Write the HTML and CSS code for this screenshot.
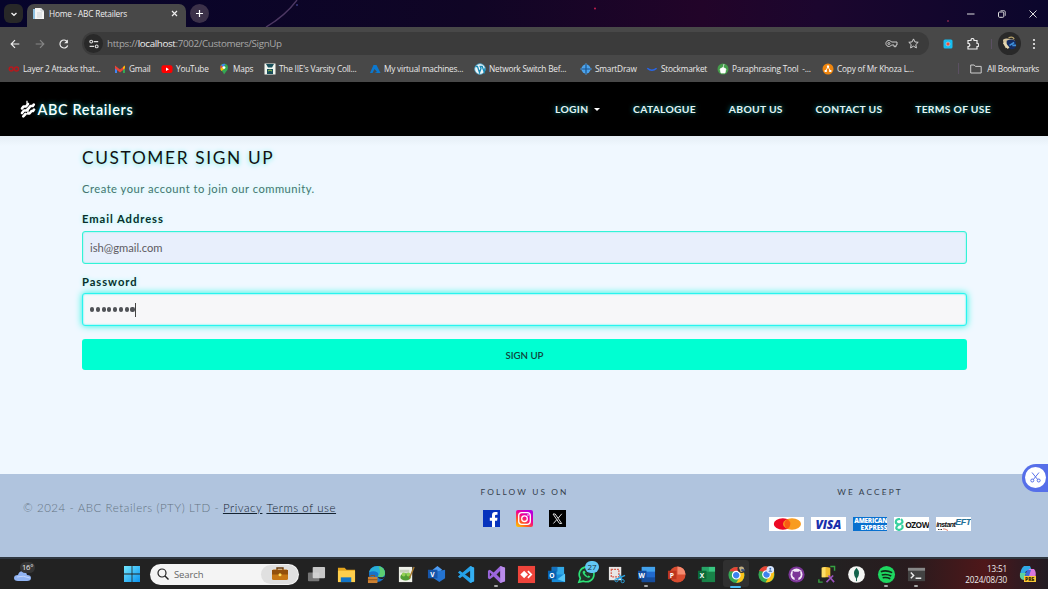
FILE: index.html
```html
<!DOCTYPE html>
<html lang="en">
<head>
<meta charset="utf-8">
<title>Home - ABC Retailers</title>
<link rel="stylesheet" href="styles.css">
</head>
<body>
<div class="screen">
  <header class="titlebar">
    <svg class="sky" width="1048" height="27" viewBox="0 0 1048 27"><path d="M266 27Q285 16 297 0" fill="none" stroke="#4d3863" stroke-width="1.4"/><circle cx="595" cy="8.500" r="1" fill="#c51f51"/><circle cx="948" cy="21" r=".8" fill="#c83b5d"/><circle cx="297" cy="5" r="1" fill="#39387e"/></svg>
    <div class="tab-search"><svg width="10" height="10" viewBox="0 0 10 10"><path d="M2.500 4 5 6.300 7.500 4" fill="none" stroke="#eee" stroke-width="1.4"/></svg></div>
    <div class="tab">
      <svg width="11" height="12" viewBox="0 0 11 12"><path d="M0 1h6v10H0z" fill="#b8d9ee"/><path d="M2 0h6l3 3v8H2z" fill="#f4f4f4"/><path d="M8 0v3h3M4 5h5M4 7h5M4 9h5" stroke="#bcc4ca" stroke-width=".7" fill="none"/><path d="M1 1v10" stroke="#64a9d5"/></svg>
      <span class="tab-title">Home - ABC Retailers</span>
      <svg class="tab-close" width="7" height="7" viewBox="0 0 7 7"><path d="m1 1 5 5m0-5L1 6" stroke="#eee" stroke-width="1.2"/></svg>
    </div>
    <div class="new-tab"><svg width="9" height="9" viewBox="0 0 9 9"><path d="M4.500 1v7M1 4.500h7" stroke="#fff" stroke-width="1.2"/></svg></div>
    <div class="window-controls">
      <svg width="8" height="10" viewBox="0 0 8 10"><path d="M0 5h7.500" stroke="#ddd"/></svg>
      <svg width="8" height="8" viewBox="0 0 8 8"><rect x=".5" y="2" width="5.300" height="5.300" rx="1" fill="none" stroke="#ddd"/><path d="M2.500.7H6q1.300 0 1.300 1.300v3.800" fill="none" stroke="#ddd" stroke-width=".8"/></svg>
      <svg width="8" height="8" viewBox="0 0 8 8"><path d="m.5.500 7 7m0-7-7 7" stroke="#ddd"/></svg>
    </div>
  </header>

  <div class="toolbar">
    <svg class="tool" width="10" height="10" viewBox="0 0 10 10"><path d="M9.300 5H1.400M5 1.200 1.200 5 5 8.800" fill="none" stroke="#eee" stroke-width="1.2"/></svg>
    <svg class="tool" width="10" height="10" viewBox="0 0 10 10"><path d="M.7 5h7.900M5 1.200 8.800 5 5 8.800" fill="none" stroke="#858585" stroke-width="1.2"/></svg>
    <svg class="tool" width="10" height="10" viewBox="0 0 10 10"><path d="M8.700 6.500A4 4 0 1 1 8.200 2.600" fill="none" stroke="#eee" stroke-width="1.2"/><path d="M8.900.5v3.700H5.200z" fill="#eee"/></svg>
    <div class="address">
      <div class="site-info"><svg width="10" height="10" viewBox="0 0 10 10"><g fill="none" stroke="#ddd" stroke-width="1.100"><circle cx="2.200" cy="2.600" r="1.400"/><path d="M4.700 2.600h4.500M.6 7.400h4.600"/><circle cx="7.700" cy="7.400" r="1.400"/></g></svg></div>
      <span class="url">https://<b>localhost</b>:7002/Customers/SignUp</span>
      <svg class="key" width="13" height="9" viewBox="0 0 13 9"><path d="M6.500 3A3 3 0 1 0 6.500 6H9v1.700h2V6h1V3z" fill="none" stroke="#ccc"/><circle cx="3.900" cy="4.500" r="1" fill="none" stroke="#ccc"/></svg>
      <svg width="11" height="11" viewBox="0 0 11 11"><path d="m5.500.9 1.400 3 3.300.4-2.400 2.300.6 3.300-2.900-1.700-2.900 1.700.6-3.300L.8 4.300l3.300-.4z" fill="none" stroke="#d2d2d2" stroke-width="1"/></svg>
    </div>
    <svg class="ext" width="10" height="10" viewBox="0 0 10 10"><rect x=".5" y=".5" width="9" height="9" rx="1.500" fill="#15bdf1"/><circle cx="5" cy="5" r="2" fill="#f04d36" stroke="#a9c9dc" stroke-width=".8"/></svg>
    <svg class="puzzle" width="12" height="12" viewBox="0 0 12 12"><path d="M1 2.500h3V2a1.500 1.500 0 0 1 3 0v.5h3v3h.3a1.500 1.500 0 0 1 0 3H10V11H1V8.500c2.500 0 2.500-3.200 0-3.200z" fill="none" stroke="#eee" stroke-width="1.200"/></svg>
    <span class="tool-line"></span>
    <div class="avatar"><svg width="15" height="15" viewBox="0 0 16 16"><path d="M1 4q3-2 6-1l6 1 1 3-6 1-1 4-3 1Q1 9 1 4" fill="#d4c49f"/><path d="M5 5q6-3 10 1l-1 7q-6 3-9-3z" fill="#142c61"/><path d="m8 10 5-3m-2 3h4" stroke="#3e8fdb" stroke-width="1.800"/><path d="m2 7 5 6" stroke="#e6d8b3" stroke-width="2.500"/><path d="M7 2q4-2 6 1" stroke="#b9a46b" stroke-width="1.500" fill="none"/></svg></div>
    <svg class="dots" width="4" height="12" viewBox="0 0 4 12"><g fill="#eee"><circle cx="2" cy="2" r="1.100"/><circle cx="2" cy="6" r="1.100"/><circle cx="2" cy="10" r="1.100"/></g></svg>
  </div>

  <div class="bookmarks">
    <div class="bm w106"><svg width="12" height="12" viewBox="0 0 12 12"><g fill="none" stroke="#b7191d" stroke-width="1.400"><circle cx="3.200" cy="6" r="2"/><circle cx="8.500" cy="6" r="2"/></g></svg><span>Layer 2 Attacks that...</span></div>
    <div class="bm w47"><svg width="12" height="12" viewBox="0 0 12 12"><path d="M1 3v7h2V5z" fill="#4285f4"/><path d="M9 5v5h2V3z" fill="#34a853"/><path d="M1 2.500 6 6.500l5-4v3l-5 4-5-4z" fill="#ea4335"/><path d="m9 4 2-1.500V5L9 6.500z" fill="#fbbc04"/></svg><span>Gmail</span></div>
    <div class="bm w57"><svg width="12" height="12" viewBox="0 0 12 12"><rect x=".5" y="2.300" width="11" height="7.700" rx="2" fill="#f00"/><path d="m5 4.400 3 1.800-3 1.800z" fill="#fff"/></svg><span>YouTube</span></div>
    <div class="bm w46"><svg width="12" height="12" viewBox="0 0 12 12"><path d="M2 4.700a4 4 0 0 1 8 0q0 2-2 4L6 11.500q-.4-2-2-3.500-2-1.700-2-3.300" fill="#34a853"/><path d="M3 2.200Q5 0 7.500 1L4.300 5.200z" fill="#4285f4"/><path d="M3 2.200Q1.700 3.700 2.300 6l2.600-2.200z" fill="#ea4335"/><path d="m2.300 6 2-2 2 2-3 2z" fill="#fbbc04"/><circle cx="6" cy="4.600" r="1.400" fill="#fff"/></svg><span>Maps</span></div>
    <div class="bm w105"><svg width="12" height="12" viewBox="0 0 12 12"><path d="M.5.500h11v11H.5z" fill="#f0f5ef"/><path d="M2 1h8L8 4.500H4zM3 6h6v5H3z" fill="#184f5a"/><path d="M4 8q2-2 4 0" stroke="#9cc343" fill="none"/></svg><span>The IIE's Varsity Coll...</span></div>
    <div class="bm w105"><svg width="12" height="12" viewBox="0 0 12 12"><path d="M4.500 2h3L11.500 10H5.500l2.500-1-2.500-3-2 4H1z" fill="#0b78cf"/></svg><span>My virtual machines...</span></div>
    <div class="bm w106"><svg width="12" height="12" viewBox="0 0 12 12"><circle cx="6" cy="6" r="5.300" fill="#eef5f8" stroke="#4daad0" stroke-width=".8"/><path d="M1.500 3.500h2l2 6L7 5.500l-.8-2h2l2 5.500 1-4" stroke="#178ab6" stroke-width="1.300" fill="none"/></svg><span>Network Switch Bef...</span></div>
    <div class="bm w66"><svg width="12" height="12" viewBox="0 0 12 12"><circle cx="6" cy="6" r="4.500" fill="#4aa3ed"/><path d="M6 0 8 3H4zM12 6 9 8V4zM6 12 4 9h4zM0 6l3-2v4z" fill="#58abee"/><path d="M6 1v10M1 6h10" stroke="#1c538c" stroke-width="1.200"/></svg><span>SmartDraw</span></div>
    <div class="bm w71"><svg width="12" height="12" viewBox="0 0 12 12"><path d="M1.300 5.200q4.600 4 9.300 0" fill="none" stroke="#2867ea" stroke-width="1.500"/></svg><span>Stockmarket</span></div>
    <div class="bm w105"><svg width="12" height="12" viewBox="0 0 12 12"><circle cx="6" cy="6" r="5.500" fill="#459c4b"/><path d="M3 6q3-3 6 0l-1 4H4zM6 5l1-4" fill="#fff" stroke="#fff" stroke-width=".7"/></svg><span>Paraphrasing Tool&nbsp; -...</span></div>
    <div class="bm w105"><svg width="12" height="12" viewBox="0 0 12 12"><circle cx="6" cy="6" r="5.500" fill="#ef850d"/><path d="m3.500 8 2.500-4 2.500 4" fill="none" stroke="#fff" stroke-width=".9"/><path d="M4.900 2.600h2.200v2H4.900zM2.600 7h2.200v2H2.600zm4.600 0h2.200v2H7.200z" fill="#fff"/></svg><span>Copy of Mr Khoza L...</span></div>
    <div class="all-bm"><svg width="12" height="10" viewBox="0 0 12 10"><path d="M.7 1h3.500l1.200 1.400h5.800V9H.7z" fill="none" stroke="#ccc"/></svg><span>All Bookmarks</span></div>
  </div>

  <nav class="navbar">
    <div class="brand"><svg width="16" height="18" viewBox="0 0 16 18"><g fill="none" stroke="#fff" stroke-width="2.600" stroke-linecap="round" stroke-linejoin="round"><path d="M2 8.500 3.500 6.500H6L8 4"/><path d="M2 13l2-2.500h2.500l2-2 2-2.500h2.300l1-1.500"/><path d="M3.300 16.300l2.200-2.300M8 13.500h1.500l2-2.500h1.500l1-1.500"/></g><path d="M7 .8v3M8 9v4" stroke="#fff" stroke-width="1.300"/></svg><span>ABC Retailers</span></div>
    <div class="nav-links"><a class="login">LOGIN <i class="caret"></i></a><a>CATALOGUE</a><a>ABOUT US</a><a>CONTACT US</a><a>TERMS OF USE</a></div>
  </nav>

  <main class="page">
    <h1><span>CUSTOMER SIGN UP</span></h1>
    <p class="lead"><span>Create your account to join our community.</span></p>
    <label class="email-label">Email Address</label>
    <div class="field filled"><span>ish@gmail.com</span></div>
    <label class="pw-label">Password</label>
    <div class="field focused"><span class="bullets"><i></i><i></i><i></i><i></i><i></i><i></i><i></i><i></i></span><i class="cursor"></i></div>
    <div class="submit"><span>SIGN UP</span></div>
    <div class="snip-tab"><div><svg width="11" height="11" viewBox="0 0 11 11"><g fill="none" stroke="#566fe9"><path d="m2 .5 5.800 7.200M9 .5 3.200 7.700"/><circle cx="2.300" cy="8.500" r="1.500"/><circle cx="8.700" cy="8.500" r="1.500"/></g></svg></div></div>
  </main>

  <footer class="footer">
    <div class="copy"><span class="c1">© 2024 - ABC Retailers (PTY) LTD - </span><a>Privacy</a><a>Terms of use</a></div>
    <div class="follow"><span class="foot-title">FOLLOW US ON</span>
      <div class="socials">
        <svg width="17" height="17" viewBox="0 0 17 17"><path d="M0 0h17v17H0z" fill="#0733bd"/><path d="M9 17v-6.300H6.800V7.800H9V5.300Q9 2 12 2h2.500v2.700h-1.300q-1.200 0-1.200 1v2.100h2.500l-.4 2.900H12V17z" fill="#fff"/></svg>
        <svg width="17" height="17" viewBox="0 0 17 17"><defs><linearGradient id="insta" x1="0" y1="1" x2=".7" y2="0"><stop stop-color="#ffd400"/><stop offset=".35" stop-color="#ff5b22"/><stop offset=".65" stop-color="#f20097"/><stop offset="1" stop-color="#b600df"/></linearGradient></defs><rect width="17" height="17" rx="2" fill="url(#insta)"/><rect x="2.700" y="2.700" width="11.600" height="11.600" rx="3" fill="none" stroke="#fff" stroke-width="1.300"/><circle cx="8.500" cy="8.700" r="2.800" fill="none" stroke="#fff" stroke-width="1.300"/><circle cx="12" cy="5" r=".8" fill="#fff"/></svg>
        <svg width="17" height="17" viewBox="0 0 17 17"><path d="M0 0h17v17H0z"/><path d="M4 4h2.200l6.500 9.500h-2.200zM12.800 3.800 9.300 8M8 9.400l-3.600 4.100" fill="none" stroke="#ddd"/></svg>
      </div>
    </div>
    <div class="accept"><span class="foot-title">WE ACCEPT</span>
      <div class="cards">
        <div class="card"><svg width="34" height="14" viewBox="0 0 34 14"><ellipse cx="12.800" cy="7" rx="9" ry="5.800" fill="#ec0824"/><ellipse cx="22" cy="7" rx="9" ry="5.800" fill="#f89c20"/><path d="M17.400 2q6 5 0 10-6-5 0-10" fill="#fa5b12"/></svg></div>
        <div class="card visa">VISA</div>
        <div class="card amex"><span class="am">AMERICAN</span><span>EXPRESS</span></div>
        <div class="card ozow"><svg width="10" height="13" viewBox="0 0 10 13"><path d="M6 1Q1 1 2 5l3 2M7 1q4 4-3 6-4 4 1 5 5-1 3-5" fill="none" stroke="#38d1a0" stroke-width="2.200"/></svg><span>OZOW</span></div>
        <div class="card eft"><span>instant</span><b>EFT</b><svg width="11" height="3" viewBox="0 0 11 3"><path d="M0 1.500h4" stroke="#333" stroke-dasharray="1 .5"/><path d="M5 1h2l3 1.500" stroke="#e28372" fill="none"/></svg></div>
      </div>
    </div>
  </footer>

  <div class="taskbar">
    <div class="weather"><svg width="22" height="20" viewBox="0 0 22 20"><path d="M4 17q-4 0-4-3t4-3q1-4 5-4 3 0 4 4 4 0 4 3t-4 3z" fill="#91b4f3"/><path d="M3 13q6-2 13 1" stroke="#c3d5fb" fill="none"/></svg><span>16°</span></div>
    <div class="ti"><svg viewBox="0 0 20 20"><defs><linearGradient id="win" x2="1" y2="1"><stop stop-color="#72e7ff"/><stop offset="1" stop-color="#0b93ee"/></linearGradient></defs><path d="M2 2h7.600v7.600H2zm8.400 0H18v7.600h-7.600zM2 10.400h7.600V18H2zm8.400 0H18V18h-7.600z" fill="url(#win)"/></svg></div>
    <div class="search"><svg width="12" height="12" viewBox="0 0 12 12"><circle cx="5" cy="5" r="4" fill="none" stroke="#222" stroke-width="1.200"/><path d="m8 8 3.500 3.500" stroke="#222" stroke-width="1.400"/></svg><span>Search</span><div class="case"><svg width="18" height="16" viewBox="0 0 18 16"><path d="M6 4V2h6v2" fill="none" stroke="#683a0a" stroke-width="1.400"/><rect x="1" y="3.500" width="16" height="10.500" rx="1.500" fill="#c67715"/><path d="M1 4h16v4.500H1z" fill="#92500c"/><circle cx="9" cy="8.700" r="1.500" fill="#ffe05c"/></svg></div></div>
    <div class="apps">
      <div class="ti"><svg viewBox="0 0 20 20"><rect x="1" y="8" width="12" height="9" rx="1" fill="#777"/><rect x="6" y="2" width="13" height="12" rx="1" fill="#d9d9d9" opacity=".9"/></svg></div>
      <div class="ti"><svg viewBox="0 0 20 20"><path d="M1 3h7l2 2h9v12H1z" fill="#e5a51d"/><path d="M1 6h18v12H1z" fill="#ffcf4c"/><path d="M4 13h11v5H4z" fill="#1275c7"/></svg></div>
      <div class="ti"><svg viewBox="0 0 20 20"><circle cx="10.500" cy="9.500" r="8.500" fill="#1773c9"/><path d="M2 8q2-7 9-7 8 0 8 8-1 5-8 3 2-2 0-4-4-3-9 0" fill="#28afd8"/><path d="M12 1.200q7 1 7 8-1 5-8 3 5-4 1-11" fill="#5cce72"/><path d="M11 12q4 2 7.500 0-.5 1.500-1.500 2.500-4 1-6-2.500" fill="#222"/><path d="M1 12.500h10V19H1z" fill="#cd8131"/><path d="M4 12.500V11h4v1.500M1 15.500h10" stroke="#8d511d" fill="none"/></svg></div>
      <div class="ti"><svg viewBox="0 0 20 20"><path d="M2 2h14v16H2z" fill="#eef0e8"/><path d="M3 5h10v3H3z" fill="#c6d0bc"/><ellipse cx="9" cy="12.500" rx="5.500" ry="3.800" fill="#519e35"/><circle cx="7" cy="10" r="2" fill="#93d155"/><circle cx="12" cy="10" r="2" fill="#93d155"/><path d="m13 14 5-12" stroke="#a7792c" stroke-width="1.500"/></svg></div>
      <div class="ti"><svg viewBox="0 0 20 20"><path d="m11 1 5 4-5 4-5-4z" fill="#4d9df5"/><path d="M8 7l11-2v9l-6 4-6-4z" fill="#2473d0"/><path d="M1 5h10v9H1z" fill="#1656aa"/><text x="3.500" y="12.300" class="glyph">V</text></svg></div>
      <div class="ti"><svg viewBox="0 0 20 20"><path d="m14 1 4 2v14l-4 2L1 8l2-2 11 8V6L3 14l-2-2z" fill="#25a1e7"/><path d="m14 1 4 2v14l-4 2z" fill="#34aff2"/></svg></div>
      <div class="ti run"><svg viewBox="0 0 20 20"><path d="m14 1 5 2v14l-5 2-7-7-4 3-2-1V6l2-1 4 3zM14 6l-4 4 4 4zM3 8v4l2-2z" fill="#9b66dc" fill-rule="evenodd"/><path d="m14 1 5 2v14l-5 2z" fill="#b98be9"/></svg></div>
      <div class="ti"><svg viewBox="0 0 20 20"><path d="M1 1h18v18H1z" fill="#ef443b"/><path d="m7.500 6 4 4-4 4-4-4z" fill="#fff"/><path d="m11.500 6.500 3.500 3.500-3.500 3.500" fill="none" stroke="#fff" stroke-width="1.800"/></svg></div>
      <div class="ti"><svg viewBox="0 0 20 20"><path d="M5 2h13v10H5z" fill="#32a9e7"/><path d="M5 2h6v5H5z" fill="#1671bd"/><path d="M5 10h14v8H5z" fill="#168bd9"/><path d="m19 9-8 6 8 3z" fill="#56c7f5"/><path d="M1 6h9v9H1z" fill="#0762b1"/><text x="2.300" y="13.300" class="glyph">O</text></svg></div>
      <div class="ti whats"><svg viewBox="0 0 20 20"><path d="m2 18 1.500-4A7.800 7.800 0 1 1 7 17z" fill="#20392b" stroke="#2ce277" stroke-width="1.700"/><path d="M7 6q-3 2 2 6 4 3 5 0l-2-1-1 1-3-3 1-1-1-2z" fill="#2ce277"/></svg><b>27</b></div>
      <div class="ti"><svg viewBox="0 0 20 20"><path d="M2 2h13v14H2z" fill="#e8e7e6"/><path d="M4.500 4.500h8v8h-8z" fill="none" stroke="#d65e4d" stroke-width="1.300" stroke-dasharray="2 1"/><path d="m10 15 9-4M13 10l3 6" stroke="#2ca2dd" stroke-width="1.500"/><circle cx="10" cy="16" r="1.700" fill="none" stroke="#2ca2dd"/><circle cx="16.500" cy="17" r="1.700" fill="none" stroke="#2ca2dd"/></svg></div>
      <div class="ti run"><svg viewBox="0 0 20 20"><path d="M5 2h14v16H5z" fill="#2169cc"/><path d="M5 2h14v5H5z" fill="#43a2ec"/><path d="M5 13h14v5H5z" fill="#164d9d"/><path d="M1 6h9v9H1z" fill="#124da1"/><text x="1.700" y="13.300" class="glyph">W</text></svg></div>
      <div class="ti"><svg viewBox="0 0 20 20"><circle cx="11" cy="10" r="8.500" fill="#d84c30"/><path d="M11 1.500v8.500h8.500Q19 2 11 1.500" fill="#f58b70"/><path d="M1 6h9v9H1z" fill="#bd351e"/><text x="3" y="13.300" class="glyph">P</text></svg></div>
      <div class="ti"><svg viewBox="0 0 20 20"><path d="M5 2h14v16H5z" fill="#188348"/><path d="M12 2h7v5h-7z" fill="#38c681"/><path d="M5 2h7v5H5z" fill="#27a568"/><path d="M1 6h9v9H1z" fill="#0c6b38"/><text x="3" y="13.300" class="glyph">X</text></svg></div>
      <div class="ti active"><svg viewBox="0 0 20 20"><circle cx="10" cy="10.500" r="8.500" fill="#35a954"/><path d="M2.500 6.500Q6 1 13 2.500l5 4.500H10z" fill="#e84335"/><path d="M10 7h7.700q2.500 11-8 12l4-7z" fill="#fbc319"/><circle cx="9.700" cy="10.700" r="4" fill="#3c82ef" stroke="#fff" stroke-width="1.200"/><circle cx="15.500" cy="4" r="4.500" fill="#313033"/><path d="M12.500 2.500q3-2 5 0l1 3-4 2z" fill="#c1ae80"/><path d="m15 5 3.500 1" stroke="#344f83" stroke-width="2"/></svg></div>
      <div class="ti"><svg viewBox="0 0 20 20"><circle cx="10" cy="10" r="8.500" fill="#35a954"/><path d="M2 6q5-8 14-2l2 4h-8z" fill="#e84335"/><path d="M10 6h8q1 12-9 12.500l4-7z" fill="#fbc319"/><circle cx="10" cy="10" r="4" fill="#3c82ef" stroke="#fff" stroke-width="1.200"/><circle cx="14" cy="5" r="4" fill="#d7e6ff"/><circle cx="14" cy="4" r="1" fill="#3c6eaf"/><path d="M12 7q2-3 4 0" fill="#3c6eaf"/></svg></div>
      <div class="ti"><svg viewBox="0 0 20 20"><circle cx="10" cy="10" r="8.500" fill="#7c3698"/><circle cx="10" cy="10" r="6.300" fill="#f3eaf7"/><path d="M8 16.300v-2.800Q4.500 12 6 8.500V6l2 1h4l2-1v2.500q1.500 3.500-2 5v2.800z" fill="#7c3698"/></svg></div>
      <div class="ti"><svg viewBox="0 0 20 20"><path d="M5 3q4-2 9 0v10H5z" fill="#f2bd2e"/><path d="M5 3q2-1 4-1v11H5z" fill="#ffdd67"/><path d="M2 15v3h4M14 1.500h4.500V6" fill="none" stroke="#36a342" stroke-width="1.500"/><path d="m10 18 7-7m-5 0 6 7" stroke="#9b54bd" stroke-width="1.700"/></svg></div>
      <div class="ti"><svg viewBox="0 0 20 20"><circle cx="10" cy="10" r="8.800" fill="#f4f5f3"/><path d="M10 3q5.500 6 0 12-5.500-6 0-12" fill="#116149"/><path d="M10 8v9" stroke="#116149"/></svg></div>
      <div class="ti run"><svg viewBox="0 0 20 20"><circle cx="10" cy="10" r="9" fill="#1ed760"/><path d="M4 7q6-2 12 1M5 10.500q5-1.500 10 1M6 13.500q4-1 8 1" fill="none" stroke="#102b18" stroke-width="1.700"/></svg></div>
      <div class="ti run"><svg viewBox="0 0 20 20"><path d="M1 3h18v14H1z" fill="#434343"/><path d="M1 3h18v3H1z" fill="#888"/><path d="m4 8 3 3-3 3m5 0h6" fill="none" stroke="#eee" stroke-width="1.500"/></svg></div>
    </div>
    <div class="clock"><span>13:51</span><span>2024/08/30</span></div>
    <div class="copilot"><svg width="18" height="18" viewBox="0 0 18 18"><path d="M5 1h6l2 5H7L5 12H1Q1 4 5 1" fill="#31a8e4"/><path d="M1 8h6l-2 7Q0 15 1 8" fill="#5bd09f"/><path d="M10 4h5q3 3 1 10h-5L9 8z" fill="#d977dd"/><path d="M8 5h4l-3 9H5z" fill="#4366d7"/><path d="M5 11h12v6H5z" fill="#f9c735"/><text x="6" y="15.800" class="pre">PRE</text></svg></div>
  </div>
</div>
</body>
</html>
```
FILE: styles.css
```css
* { box-sizing: border-box; }
body { margin: 0; background: #f0f8ff; font-family: Lato, "Open Sans", sans-serif; }
svg { display: block; flex: none; }
i { font-style: normal; }
.screen { width: 1048px; height: 589px; overflow: hidden; display: flex; flex-direction: column; white-space: nowrap; }
.titlebar { position: relative; height: 27px; flex: none; display: flex; align-items: center; padding-left: 4px; background: linear-gradient(90deg, #06042b, #100525 45%, #220429 67%, #1c062e 78%, #0b062c); color: #eee; font-family: "Open Sans", sans-serif; }
.sky { position: absolute; left: 0; top: 0; }
.tab-search { position: relative; width: 19px; height: 19px; border-radius: 6px; background: #282828; display: grid; place-items: center; }
.tab { position: relative; display: flex; align-items: center; align-self: flex-end; width: 159px; height: 23px; margin-left: 4px; padding: 0 8px 4px 6px; border-radius: 7px 7px 0 0; background: #484848; }
.tab-title { margin-left: 5px; font-size: 8.3px; letter-spacing: -.2px; }
.tab-close { margin-left: auto; }
.new-tab { width: 19px; height: 19px; margin-left: 4px; border-radius: 50%; background: #3c3149; display: grid; place-items: center; }
.window-controls { display: flex; align-items: center; gap: 23px; margin-left: auto; padding-right: 11px; }
.toolbar { height: 33px; flex: none; display: flex; align-items: center; padding: 0 10px; background: #484848; }
.tool { margin-right: 14.5px; }
.tool:nth-child(3) { margin-right: 15px; }
.address { flex: none; width: 847px; height: 23px; margin-left: -2px; border-radius: 12px; background: #3b3b3b; display: flex; align-items: center; padding: 0 10px 0 2px; }
.site-info { width: 19px; height: 19px; border-radius: 50%; background: #292929; display: grid; place-items: center; }
.url { margin-left: 4px; color: #a8a8a8; font-family: "Open Sans", sans-serif; font-size: 9.8px; letter-spacing: -.35px; }
.url b { color: #eee; font-weight: 400; }
.key { margin-left: auto; margin-right: 10px; }
.ext { margin-left: 14px; }
.puzzle { margin-left: 14px; }
.tool-line { width: 1px; height: 10px; margin-left: 12px; background: #5b5062; }
.avatar { width: 23px; height: 23px; margin-left: 6px; border-radius: 50%; background: #292929; display: grid; place-items: center; }
.dots { margin-left: 11px; }
.bookmarks { height: 22px; flex: none; display: flex; align-items: center; padding: 0 9px 5px 8px; background: #484848; color: #e8e8e8; font-family: "Open Sans", sans-serif; font-size: 8.3px; letter-spacing: -.22px; }
.bm, .all-bm { display: flex; align-items: center; gap: 3px; }
.bm { flex: none; }
.w106 { width: 106px; }
.w47 { width: 47px; }
.w57 { width: 57px; }
.w46 { width: 46px; }
.w105 { width: 105px; }
.w66 { width: 66px; }
.w71 { width: 71px; }
.all-bm { margin-left: auto; padding-left: 11px; gap: 5px; border-left: 1px solid #5b5062; letter-spacing: -.28px; }
.navbar { height: 54px; flex: none; display: flex; align-items: center; justify-content: space-between; padding: 0 57px 0 20px; background: #000; color: #f5ffff; }
.brand { display: flex; align-items: center; gap: 1.5px; font-size: 14.4px; letter-spacing: .65px; font-weight: 600; text-shadow: 0 0 5px #00a6a6; }
.nav-links { display: flex; gap: 32.8px; font-size: 10.3px; font-weight: 700; letter-spacing: .3px; color: #e4f3f3; text-shadow: 0 0 5px #009a9a; }
.caret { display: inline-block; margin: 0 0 2px 3px; border: 3px solid transparent; border-top-color: #fff; border-bottom: 0; }
.page { position: relative; height: 338px; flex: none; padding: 10px 81px 0 82px; background: linear-gradient(#e5eef5, #f0f8ff 10px); color: #111; }
h1 { margin: 0; height: 22px; font-size: 17.3px; line-height: 23px; font-weight: 400; letter-spacing: 1.65px; text-shadow: 0 1px 5px #5cf0e2; }
.lead { margin: 13px 0 0; height: 16px; color: #44756f; font-size: 11.2px; line-height: 16px; letter-spacing: .49px; text-shadow: 0 0 5px #bafff1; }
label { display: block; height: 16px; margin-top: 14px; margin-bottom: 4px; color: #082f2b; font-size: 11.2px; line-height: 16px; font-weight: 700; letter-spacing: .95px; text-shadow: 0 0 4px #9dfff0; }
.field { display: flex; align-items: center; height: 33px; border: 1px solid #32f3d7; border-radius: 3px; padding: 0 7px; color: #5d5b62; font-size: 11.2px; box-shadow: inset 0 0 1.5px #32f3d7; }
.filled { background: #e8effc; }
.pw-label { margin-top: 10px; margin-bottom: 3px; }
.focused { background: #f7f7f9; border-color: #29f4ef; box-shadow: 0 0 7px #1bf5df, inset 0 0 2px #29f4ef; }
.bullets { display: flex; gap: 1.7px; }
.bullets i { width: 4.1px; height: 4.1px; border-radius: 50%; background: #505257; }
.cursor { width: 1px; height: 14px; background: #444; }
.submit { height: 31px; margin-top: 13px; border-radius: 3px; background: #00ffd2; display: grid; place-items: center; color: #10443b; font-size: 9.7px; font-weight: 600; }
.snip-tab { position: absolute; right: 0; top: 328px; z-index: 2; width: 26px; height: 28px; padding: 3px; border-radius: 14px 0 0 14px; background: #566fe9; }
.snip-tab div { width: 21px; height: 21px; border-radius: 50%; background: #fff; display: grid; place-items: center; }
.footer { height: 83px; flex: none; display: grid; grid-template-columns: 349px 349px 350px; background: #b0c4de; color: #35404d; }
.copy { display: flex; padding: 25px 0 0 23px; font-size: 11.5px; line-height: 18px; font-weight: 300; color: #657483; letter-spacing: .56px; }
.c1 { white-space: pre; }
.copy a { color: #142331; text-decoration: underline; margin-right: 4px; }
.follow, .accept { display: flex; flex-direction: column; align-items: center; padding-top: 13px; }
.follow { padding-left: 2px; }
.accept { padding-right: 6px; }
.foot-title { font-size: 8.3px; line-height: 11px; letter-spacing: 2.15px; }
.socials { display: flex; gap: 16.3px; margin-top: 12px; }
.cards { display: flex; gap: 7.2px; margin-top: 19px; }
.card { width: 34.5px; height: 14px; background: #fff; overflow: hidden; display: flex; align-items: center; justify-content: center; font-family: "Open Sans", sans-serif; }
.visa { color: #1930ac; font-size: 12px; font-weight: 800; font-style: italic; letter-spacing: -.2px; }
.amex { flex-direction: column; align-items: flex-end; background: #0870cf; color: #fff; font-size: 6.4px; line-height: 7px; font-weight: 800; letter-spacing: -.1px; }
.am { letter-spacing: -.25px; }
.ozow { color: #151719; font-size: 8.3px; font-weight: 700; letter-spacing: -.5px; gap: 1px; }
.eft { position: relative; color: #111; font-family: "Liberation Sans", sans-serif; font-size: 7px; font-style: italic; font-weight: 700; letter-spacing: -.55px; }
.eft b { color: #247097; font-size: 9px; margin-top: -4px; }
.eft svg { position: absolute; left: 2px; bottom: 0; }
.taskbar { height: 32px; flex: none; display: flex; align-items: center; border-top: 2px solid #303841; background: linear-gradient(90deg, #222 0 78%, #291b1e 87%, #4f1719 94%, #351a20 97%, #221b22); color: #eee; font-family: "Open Sans", sans-serif; }
.weather { position: relative; width: 103px; height: 30px; padding: 5px 0 0 14px; margin-right: 14px; }
.weather span { position: absolute; left: 20px; top: 3px; padding: 1px 2px; border-radius: 6px; background: #353535; font-size: 7.5px; line-height: 9px; letter-spacing: -.2px; }
.ti { position: relative; width: 30px; height: 30px; flex: none; display: grid; place-items: center; }
.ti svg { width: 20px; height: 20px; }
.search { width: 149px; height: 21px; margin-left: 3px; border-radius: 11px; background: #f4f4f4; display: flex; align-items: center; padding: 0 1px 0 7px; color: #666; font-size: 9.5px; flex: none; letter-spacing: -.1px; }
.search span { margin-left: 5px; }
.case { width: 37px; height: 19px; margin-left: auto; border-radius: 10px; background: #e0e0e0; display: grid; place-items: center; }
.apps { display: flex; margin-left: 2px; }
.apps .ti svg { width: 19px; height: 19px; }
.run::after, .active::after { content: ""; position: absolute; left: 13px; bottom: 2px; width: 4px; height: 2px; border-radius: 1px; background: #aaa; }
.active::before { content: ""; position: absolute; left: 2px; top: 1px; width: 26px; height: 27px; border-radius: 3px; background: #303030; }
.active svg { position: relative; }
.active::after { left: 9px; width: 11px; bottom: 1px; background: #4bbcf4; }
.glyph { fill: #fff; font: 700 7px "Open Sans", sans-serif; }
.pre { fill: #352800; font: 800 5px "Open Sans", sans-serif; }
.whats b { position: absolute; left: 14px; top: 2px; width: 14px; height: 12px; border-radius: 6px; background: #62c8f5; color: #173244; font-size: 8px; line-height: 12px; text-align: center; font-weight: 400; }
.clock { display: flex; flex-direction: column; align-items: flex-end; margin-left: auto; padding-bottom: 1px; font-size: 8.1px; line-height: 11px; letter-spacing: -.12px; }
.copilot { width: 41px; padding-left: 12px; }
```
